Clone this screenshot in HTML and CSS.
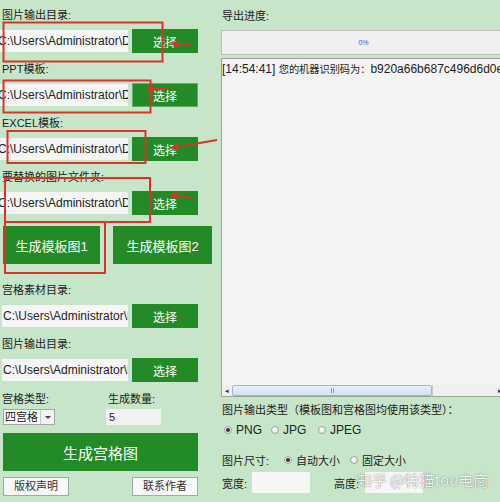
FILE: index.html
```html
<!DOCTYPE html>
<html lang="zh-CN">
<head>
<meta charset="utf-8">
<title>宫格图生成</title>
<link rel="stylesheet" href="styles.css">
</head>
<body>
<div class="app">
  <div class="left">
    <div class="field">
      <div class="label">图片输出目录:</div>
      <div class="row">
        <div class="path shifted">C:\Users\Administrator\Desktop\out</div>
        <button class="btn-pick">选择</button>
      </div>
    </div>
    <div class="field">
      <div class="label">PPT模板:</div>
      <div class="row">
        <div class="path shifted">C:\Users\Administrator\Desktop\ppt</div>
        <button class="btn-pick focused">选择</button>
      </div>
    </div>
    <div class="field">
      <div class="label">EXCEL模板:</div>
      <div class="row">
        <div class="path shifted">C:\Users\Administrator\Desktop\xls</div>
        <button class="btn-pick">选择</button>
      </div>
    </div>
    <div class="field">
      <div class="label">要替换的图片文件夹:</div>
      <div class="row">
        <div class="path shifted">C:\Users\Administrator\Desktop\img</div>
        <button class="btn-pick">选择</button>
      </div>
    </div>
    <div class="gen-row">
      <button class="btn-gen one">生成模板图1</button>
      <button class="btn-gen two">生成模板图2</button>
    </div>
    <div class="field first-after">
      <div class="label">宫格素材目录:</div>
      <div class="row">
        <div class="path">C:\Users\Administrator\Desktop\src</div>
        <button class="btn-pick">选择</button>
      </div>
    </div>
    <div class="field">
      <div class="label">图片输出目录:</div>
      <div class="row">
        <div class="path">C:\Users\Administrator\Desktop\out</div>
        <button class="btn-pick">选择</button>
      </div>
    </div>
    <div class="opts">
      <div class="label">宫格类型:</div>
      <div class="label">生成数量:</div>
      <div class="select"><span class="sel-text">四宫格</span><span class="sel-arrow"></span></div>
      <div class="num">5</div>
    </div>
    <button class="btn-big">生成宫格图</button>
    <div class="foot">
      <button class="btn-plain">版权声明</button>
      <button class="btn-plain">联系作者</button>
    </div>
  </div>

  <div class="right">
    <div class="label">导出进度:</div>
    <div class="progress"><span class="pct">0%</span></div>
    <div class="log">
      <div class="log-text">[14:54:41] <span class="cjk">您的机器识别码为：</span>b920a66b687c496d6d0e1f</div>
      <div class="hscroll">
        <span class="arrow">&#9666;</span>
        <span class="thumb"><span class="grip"></span></span>
        <span class="track"></span>
        <span class="arrow">&#9656;</span>
      </div>
    </div>
    <div class="label out-type">图片输出类型（模板图和宫格图均使用该类型）：</div>
    <div class="radios">
      <span class="radio-item"><span class="radio checked"></span>PNG</span>
      <span class="radio-item"><span class="radio"></span>JPG</span>
      <span class="radio-item"><span class="radio"></span>JPEG</span>
    </div>
    <div class="size-row">
      <span class="size-label">图片尺寸:</span>
      <span class="radio-item wide"><span class="radio checked"></span>自动大小</span>
      <span class="radio-item wide"><span class="radio"></span>固定大小</span>
    </div>
    <div class="dim-row">
      <span class="dim-label">宽度:</span>
      <span class="dim-input"></span>
      <span class="dim-label second">高度:</span>
      <span class="dim-input"></span>
    </div>
  </div>

  <svg class="annot" width="500" height="502" viewBox="0 0 500 502">
    <g fill="none" stroke="#d8342b" stroke-width="2">
      <rect x="3.5" y="22.5" width="159" height="39"/>
      <rect x="3.5" y="80.5" width="147" height="32"/>
      <rect x="7.5" y="131" width="138" height="32"/>
      <rect x="5" y="178" width="145" height="44"/>
      <rect x="5" y="222" width="100" height="51"/>
      <line x1="192" y1="44" x2="176" y2="44"/>
      <line x1="168" y1="89" x2="152" y2="89"/>
      <line x1="217" y1="140" x2="176" y2="147"/>
      <line x1="193" y1="198" x2="175" y2="196"/>
    </g>
    <g fill="#d8342b">
      <polygon points="170,44 178,40 178,48"/>
      <polygon points="146,89 154,85 154,93"/>
      <polygon points="170,148 177,143 178,151"/>
      <polygon points="169,195 177,192 176,200"/>
    </g>
  </svg>
  <div class="watermark">知乎 @特猫tou电商</div>
</div>
</body>
</html>
```

FILE: styles.css
```css
* { box-sizing: border-box; }

html, body {
  margin: 0;
  padding: 0;
  background: #c7e5c9;
}

body {
  font-family: "Liberation Sans", "Noto Sans CJK SC", sans-serif;
  color: #222;
  width: 500px;
  height: 502px;
  overflow: hidden;
}

button {
  font-family: "Liberation Sans", "Noto Sans CJK SC", sans-serif;
  padding: 0;
  margin: 0;
  cursor: pointer;
}

.app {
  position: relative;
  display: flex;
  width: 500px;
  height: 502px;
  overflow: hidden;
}

.left {
  width: 221px;
  flex: none;
  padding-top: 7px;
  display: flex;
  flex-direction: column;
}

.label {
  font-size: 11px;
  line-height: 16px;
  height: 16px;
  padding-left: 2px;
  color: #222;
  white-space: nowrap;
}

.field { margin-bottom: 8px; }
.field .label { margin-bottom: 6px; }
.field.first-after { margin-top: 18px; }

.row {
  display: flex;
  align-items: center;
  height: 24px;
  gap: 4px;
}

.path {
  width: 126px;
  height: 22px;
  margin-left: 2px;
  background: #f6f6f6;
  font-size: 12px;
  line-height: 22px;
  white-space: nowrap;
  overflow: hidden;
  padding-left: 1px;
  color: #222;
}

.path.shifted {
  margin-left: 0;
  width: 128px;
  text-indent: -3px;
}

.btn-pick {
  width: 66px;
  height: 24px;
  background: #228b27;
  color: #fff;
  border: 1px solid #228b27;
  font-size: 12px;
}

.btn-pick.focused { border-color: #5fae63; }

.gen-row {
  display: flex;
  margin-top: 3px;
  height: 38px;
}

.btn-gen {
  height: 38px;
  background: #228b27;
  border: none;
  color: #fff;
  font-size: 13px;
}

.btn-gen.one { width: 97px; margin-left: 3px; }
.btn-gen.two { width: 99px; margin-left: 13px; }

.opts {
  display: grid;
  grid-template-columns: 106px 60px;
  row-gap: 2px;
  margin-top: 1px;
}

.select {
  display: flex;
  width: 52px;
  height: 16px;
  margin-left: 3px;
  background: #fff;
  border: 1px solid #a7a7a7;
}

.sel-text {
  flex: 1;
  font-size: 11px;
  line-height: 14px;
  padding-left: 1px;
}

.sel-arrow {
  width: 14px;
  border-left: 1px solid #c8c8c8;
  background: #f2f2f2;
  position: relative;
}

.sel-arrow::after {
  content: "";
  position: absolute;
  left: 4px;
  top: 6px;
  border-left: 3px solid transparent;
  border-right: 3px solid transparent;
  border-top: 3px solid #444;
}

.num {
  width: 55px;
  height: 16px;
  background: #f1f1f1;
  font-size: 11px;
  line-height: 17px;
  padding-left: 3px;
}

.btn-big {
  width: 195px;
  height: 38px;
  margin-top: 8px;
  margin-left: 3px;
  background: #228b27;
  color: #fff;
  border: none;
  font-size: 15px;
}

.foot {
  display: flex;
  justify-content: space-between;
  width: 198px;
  margin-top: 6px;
  padding-left: 3px;
}

.btn-plain {
  width: 66px;
  height: 19px;
  background: #f7f7f7;
  border: 1px solid #a6a6a6;
  color: #333;
  font-size: 11px;
  line-height: 17px;
}

/* right column */
.right {
  width: 285px;
  flex: none;
  padding-top: 8px;
  display: flex;
  flex-direction: column;
}

.right .label { padding-left: 1px; }

.progress {
  margin-top: 6px;
  height: 25px;
  background: #efefef;
  border: 1px solid #bdbdbd;
  display: flex;
  align-items: center;
  justify-content: center;
}

.pct {
  font-size: 7px;
  color: #3a68c6;
}

.log {
  margin-top: 3px;
  height: 339px;
  background: #f4f4f4;
  border: 1px solid #9aa59a;
  display: flex;
  flex-direction: column;
  justify-content: space-between;
}

.log-text {
  font-size: 12px;
  line-height: 16px;
  padding-top: 2px;
  white-space: nowrap;
  overflow: hidden;
  color: #222;
}

.log-text .cjk { font-size: 10.2px; }

.hscroll {
  display: flex;
  height: 11px;
  margin-bottom: 0;
  background: #f0f0f0;
}

.hscroll .arrow {
  width: 10px;
  font-size: 7px;
  line-height: 11px;
  text-align: center;
  color: #333;
}

.hscroll .thumb {
  width: 200px;
  background: linear-gradient(#e9f0f9, #d3e1f1);
  border: 1px solid #9db4d3;
  border-radius: 2px;
  display: flex;
  justify-content: center;
  align-items: center;
}

.hscroll .grip {
  width: 3px;
  height: 5px;
  border-left: 1px solid #8aa0bd;
  border-right: 1px solid #8aa0bd;
}

.hscroll .track {
  flex: 1;
  border-left: 1px solid #c9c9c9;
}

.label.out-type { margin-top: 5px; }

.radios {
  display: flex;
  height: 14px;
  margin-top: 5px;
  padding-left: 3px;
  font-size: 12px;
  line-height: 14px;
}

.radio-item {
  display: flex;
  align-items: center;
  width: 47px;
  white-space: nowrap;
}

.radio-item.wide {
  width: 66px;
  font-size: 11px;
}

.radio {
  width: 8px;
  height: 8px;
  border-radius: 50%;
  border: 1px solid #a3a3a3;
  background: radial-gradient(circle at 40% 35%, #ffffff, #dcdcdc);
  margin-right: 4px;
  position: relative;
  flex: none;
}

.radio.checked::after {
  content: "";
  position: absolute;
  left: 1px;
  top: 1px;
  width: 4px;
  height: 4px;
  border-radius: 50%;
  background: #333;
}

.size-row {
  display: flex;
  align-items: center;
  height: 14px;
  margin-top: 16px;
  padding-left: 1px;
}

.size-label {
  width: 62px;
  font-size: 11px;
}

.dim-row {
  display: flex;
  align-items: center;
  height: 21px;
  margin-top: 5px;
  padding-left: 1px;
}

.dim-label {
  font-size: 11px;
  width: 30px;
}

.dim-label.second {
  margin-left: 24px;
  width: 31px;
}

.dim-input {
  width: 58px;
  height: 21px;
  background: #f6f6f6;
}

.annot {
  position: absolute;
  left: 0;
  top: 0;
  pointer-events: none;
}

.watermark {
  position: absolute;
  left: 357px;
  top: 470px;
  font-family: "Noto Sans CJK SC", sans-serif;
  font-size: 15px;
  line-height: 20px;
  color: rgba(255, 255, 255, 0.92);
  text-shadow: 0 0 1px rgba(0, 0, 0, 0.45), 0 0 2px rgba(0, 0, 0, 0.2);
  white-space: nowrap;
  pointer-events: none;
}
```
